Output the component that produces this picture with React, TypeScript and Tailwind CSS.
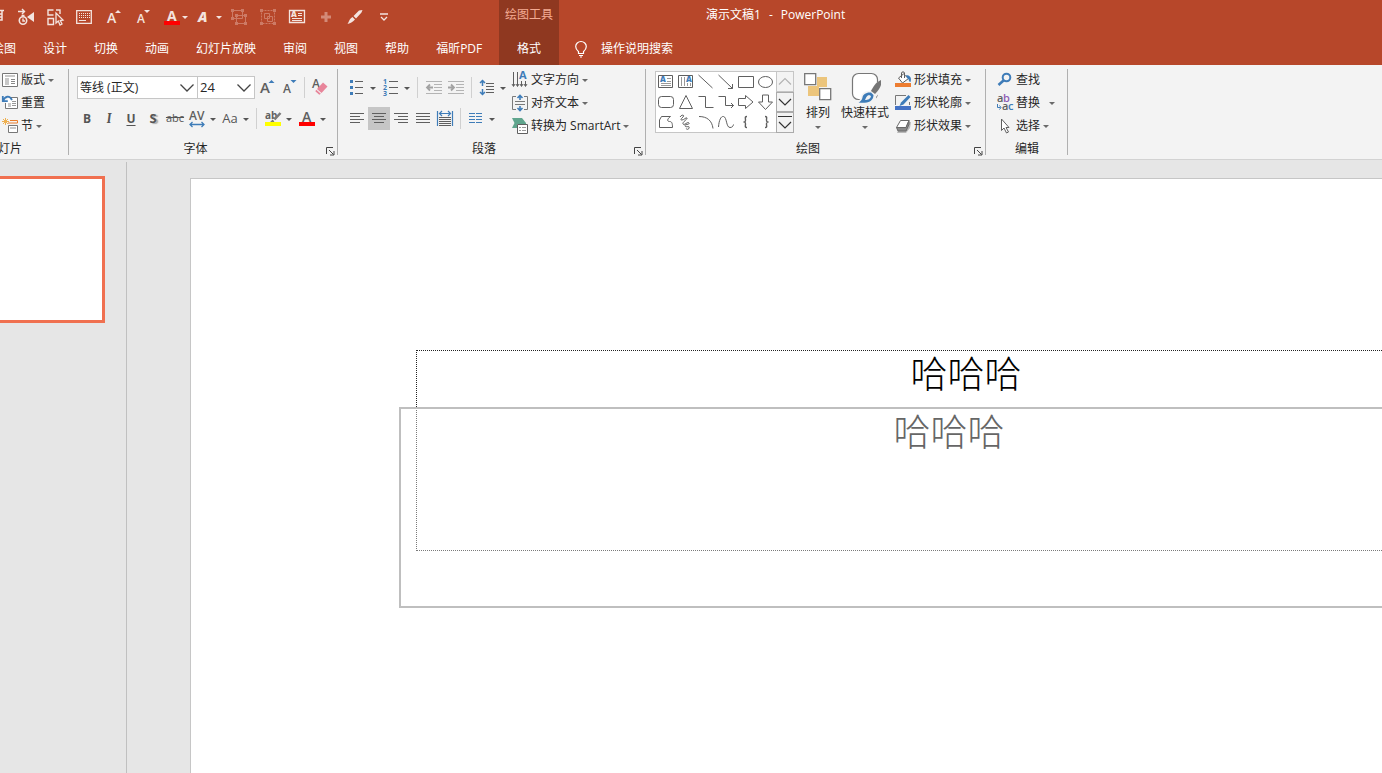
import React from 'react';
import clsx from 'clsx';

const TABS = ['绘图', '设计', '切换', '动画', '幻灯片放映', '审阅', '视图', '帮助', '福昕PDF'];

const GRAY = '#5f5f5f';
const BLUE = '#3e7cb8';

interface IconProps {
  size?: number;
  children: React.ReactNode;
}

const Icon: React.FC<IconProps> = ({ size = 16, children }) => (
  <svg width={size} height={size} viewBox={`0 0 ${size} ${size}`} fill="none" className="shrink-0 overflow-visible" aria-hidden="true">
    {children}
  </svg>
);

const Caret = ({ className }: { className?: string }) => (
  <svg width="10" height="10" viewBox="0 0 10 10" className={clsx('shrink-0', className)} aria-hidden="true">
    <path d="M2 4h6L5 7z" fill="currentColor" />
  </svg>
);

const Divider = ({ className = 'mx-1' }: { className?: string }) => (
  <div className={clsx('h-[21px] w-px shrink-0 bg-[#d0d0d0]', className)}></div>
);

interface ToolProps {
  label: string;
  menu?: boolean;
  active?: boolean;
  children: React.ReactNode;
}

// Small ribbon button, with an optional menu arrow
const Tool: React.FC<ToolProps> = ({ label, menu, active, children }) => (
  <button aria-label={label} title={label} className={clsx('flex h-[23px] shrink-0 items-center text-[#555]', active && 'bg-[#c6c6c6]')}>
    <span className="flex w-[22px] justify-center">{children}</span>
    {menu && <Caret />}
  </button>
);

// Icon + caption row
const RowTool: React.FC<{ text: string; menu?: boolean; wide?: boolean; icon: React.ReactNode }> = ({ text, menu, wide, icon }) => (
  <button className="flex h-[23px] items-center whitespace-nowrap">
    {icon}
    <span className="ml-[3px]">{text}</span>
    {menu && <Caret className={clsx('text-[#6a6a6a]', wide ? 'ml-[7px]' : 'ml-px')} />}
  </button>
);

interface GroupProps {
  label: string;
  launcher?: boolean;
  className?: string;
  labelClass?: string;
  children: React.ReactNode;
}

const Group: React.FC<GroupProps> = ({ label, launcher, className, labelClass = 'text-center', children }) => (
  <section className="flex shrink-0 flex-col">
    <div className="relative flex-1 pt-[3px] after:absolute after:-bottom-[18px] after:right-0 after:top-1 after:w-px after:bg-[#b0b0b0]">
      <div className={clsx('flex h-[69px]', className)}>{children}</div>
    </div>
    <div className="flex h-[22px] items-center pt-0.5">
      <span className={clsx('flex-1 whitespace-nowrap', labelClass)}>{label}</span>
      {launcher && (
        <button aria-label={`${label}设置`} className="mr-[3px] mt-1 w-[13px] pl-1">
          <Icon size={9}>
            <path d="M.5 7V.5H7M3 3l4.500 4.500M8 4v4H4" stroke="#444" />
          </Icon>
        </button>
      )}
    </div>
  </section>
);

const QatButton: React.FC<{ label: string; children: React.ReactNode }> = ({ label, children }) => (
  <button aria-label={label} title={label} className="flex h-6 w-[29px] shrink-0 items-center justify-center">
    {children}
  </button>
);

const QatMenuButton: React.FC<{ label: string; children: React.ReactNode }> = ({ label, children }) => (
  <button aria-label={label} title={label} className="flex h-6 w-[34px] shrink-0 items-center justify-end">
    {children}
    <Caret />
  </button>
);

const QuickAccess = () => (
  <div className="-ml-[18px] flex h-[33px] items-center text-[#f4e4df]">
    <QatButton label="从头开始">
      <Icon>
        <path d="M0 1.500h15M2 2v9h11V2M13 5H8v3h5M7 11v4" stroke="currentColor" strokeWidth="1.500" />
      </Icon>
    </QatButton>
    <QatButton label="动画计时">
      <Icon size={18}>
        <circle cx="6" cy="12.500" r="3.700" stroke="currentColor" strokeWidth="1.600" />
        <path d="M6 10.500v2.500h2M4.500 7.500h3M1 3.500h6M5 1l2.500 2.500L5 6" stroke="currentColor" strokeWidth="1.400" />
        <path d="M17 4v10l-7-5z" fill="currentColor" />
      </Icon>
    </QatButton>
    <QatButton label="选择对象">
      <Icon size={18}>
        <path d="M7.500 7H2V2h5.500M10 2h4v4M2 10.500h5.500v6H2z" stroke="currentColor" strokeWidth="1.400" />
        <path d="M10 5v10l2.300-2 1.700 4 2-1-1.700-3.500 2.700-.500z" stroke="currentColor" strokeWidth="1.300" />
      </Icon>
    </QatButton>
    <QatButton label="屏幕键盘">
      <Icon>
        <path d="M.7 1.700h14.600v12.600H.7z" stroke="currentColor" strokeWidth="1.300" />
        <path d="M3 4.500h11M3 6.500h11M3 8.500h11" stroke="currentColor" strokeDasharray="1 1" />
        <path d="M3 11.500h7" stroke="currentColor" />
      </Icon>
    </QatButton>
    <QatButton label="增大字号">
      <Icon>
        <text x="2" y="14" fontSize="14" fontWeight="600" fill="currentColor">A</text>
        <path d="M10 4h6l-3-3z" fill="currentColor" />
      </Icon>
    </QatButton>
    <QatButton label="减小字号">
      <Icon>
        <text x="3" y="14" fontSize="12" fontWeight="600" fill="currentColor">A</text>
        <path d="M10 1h6l-3 3z" fill="currentColor" />
      </Icon>
    </QatButton>
    <QatMenuButton label="字体颜色">
      <Icon>
        <text x="3" y="12" fontSize="14" fontWeight="700" fill="currentColor">A</text>
        <path d="M0 12h16v4H0z" fill="#ff0000" />
      </Icon>
    </QatMenuButton>
    <QatMenuButton label="文本效果">
      <Icon>
        <text x="0" y="13" fontSize="14" fontWeight="800" fontStyle="italic" fill="currentColor">A</text>
      </Icon>
    </QatMenuButton>
    <QatButton label="组合">
      <Icon>
        <g className="text-[#cd7a65]" stroke="currentColor" fill="none">
          <path d="M1.500 1.500h10v8h-10zM5.500 6.500h9v8h-9z" />
          <path d="M0 0h3v3H0zM10 0h3v3h-3zM0 8h3v3H0zM4 5h3v3H4zM13 5h3v3h-3zM4 13h3v3H4zM13 13h3v3h-3z" fill="currentColor" stroke="none" />
        </g>
      </Icon>
    </QatButton>
    <QatButton label="取消组合">
      <Icon>
        <g className="text-[#cd7a65]" stroke="currentColor" fill="none">
          <path d="M1.500 1.500h13v13h-13z" strokeDasharray="2 1" />
          <path d="M4.500 4.500h5v5h-5zM7.500 7.500h5v5h-5z" />
          <path d="M0 0h3v3H0zM13 0h3v3h-3zM0 13h3v3H0zM13 13h3v3h-3z" fill="currentColor" stroke="none" />
        </g>
      </Icon>
    </QatButton>
    <QatButton label="文本框">
      <Icon>
        <path d="M.5 1.500h15v12H.5z" stroke="currentColor" strokeWidth="1.300" />
        <text x="2" y="8" fontSize="8" fontWeight="800" fill="currentColor">A</text>
        <path d="M9 4.500h4M9 6.500h4M3 9.500h10M3 11.500h10" stroke="currentColor" />
      </Icon>
    </QatButton>
    <QatButton label="添加">
      <Icon>
        <path d="M8 3v10M3 8h10" stroke="#d38a77" strokeWidth="3" />
      </Icon>
    </QatButton>
    <QatButton label="格式刷">
      <Icon>
        <path d="M15.500 1 12 1.500 6.500 7l2.500 2.500 5.500-6zM5.500 8l2.500 2.500C6 13 4 14 .5 15 2 13 2.500 9.500 5.500 8z" fill="currentColor" />
      </Icon>
    </QatButton>
    <QatButton label="自定义快速访问工具栏">
      <Icon size={10}>
        <path d="M1 2h8M2 5l3 3 3-3" stroke="currentColor" strokeWidth="1.300" />
      </Icon>
    </QatButton>
  </div>
);

const TitleBar = () => (
  <header className="flex h-[65px] shrink-0 overflow-hidden bg-[#b7472a] text-white">
    <div className="w-[499px] shrink-0">
      <QuickAccess />
      <nav className="-ml-2 flex h-8 items-center gap-[27px]">
        {TABS.map((tab) => (
          <button key={tab} className="shrink-0 whitespace-nowrap">{tab}</button>
        ))}
      </nav>
    </div>
    <div className="w-[60px] shrink-0 bg-[#8f3820] text-center">
      <p className="flex h-[33px] items-center justify-center pb-1 text-[#f4ab93]">绘图工具</p>
      <button className="h-8 w-full">格式</button>
    </div>
    <div className="flex-1">
      <h1 className="flex h-[33px] items-center gap-2 whitespace-nowrap pb-1 pl-[147px]">
        <span>演示文稿1</span>
        <span>-</span>
        <span>PowerPoint</span>
      </h1>
      <button className="flex h-8 items-center gap-3 pl-[14px]">
        <Icon>
          <path d="M5.500 12.500v-2C4 9 2.700 8 2.700 5.500a5.300 5 0 0 1 10.600 0C13.300 8 12 9 10.500 10.500v2zM6 14.500h4M7 16h2" stroke="#fff" strokeWidth="1.200" />
        </Icon>
        <span>操作说明搜索</span>
      </button>
    </div>
  </header>
);

const Combo: React.FC<{ label: string; value: string; className: string }> = ({ label, value, className }) => (
  <div className={clsx('relative h-[23px] border border-[#c6c6c6] bg-white', className)}>
    <select aria-label={label} className="h-full w-full appearance-none bg-transparent pl-0.5 outline-none">
      <option>{value}</option>
    </select>
    <svg width="14" height="8" viewBox="0 0 14 8" fill="none" className="pointer-events-none absolute right-[3px] top-[7px]" aria-hidden="true">
      <path d="M.5.500 7 7 13.500.500" stroke="#444" strokeWidth="1.300" />
    </svg>
  </div>
);

const SlidesGroup = () => (
  <Group label="幻灯片" labelClass="-ml-3.5" className="w-[69px] flex-col pl-0.5">
    <RowTool text="版式" menu icon={
      <Icon>
        <path d="M.5 1.500h15v13H.5z" fill="#fff" stroke="#777" />
        <path d="M3 3h10v2H3zM3 6h4v7H3z" fill="#c8c8c8" />
        <path d="M9 7.500h4M9 9.500h4M9 11.500h4" stroke="#888" />
      </Icon>
    } />
    <RowTool text="重置" icon={
      <Icon>
        <path d="M7 2.500h8.500v11h-12V8" fill="#fff" stroke="#777" />
        <path d="M6 8h3v4H6z" fill="#c8c8c8" />
        <path d="M10 6.500h4M10 8.500h4M10 10.500h4" stroke="#999" />
        <path d="M1 6C3 1 7.500 0 10 5M.8 1v5.200h5" stroke={BLUE} strokeWidth="1.800" />
      </Icon>
    } />
    <RowTool text="节" menu icon={
      <Icon>
        <path d="M3.500 0v7M0 3.500h7M1 1l5 5M6 1 1 6" stroke="#eeb04f" />
        <path d="M8 2.500h7.500V5H6" stroke="#e87d2c" />
        <path d="M6.500 7.500h9v7h-9z" fill="#fff" stroke="#777" />
        <path d="M8 9h6v2H8z" fill="#c8c8c8" />
      </Icon>
    } />
  </Group>
);

const FontGroup = () => (
  <Group label="字体" launcher className="w-[269px] flex-col gap-2 pl-2 pt-2">
    <div className="flex items-center">
      <Combo label="字体" value="等线 (正文)" className="w-[121px]" />
      <Combo label="字号" value="24" className="-ml-px w-[58px] text-[13px]" />
      <span className="ml-px flex">
        <Tool label="增大字号">
          <Icon>
            <text x="1" y="13" fontSize="15" fontWeight="600" fill={GRAY}>A</text>
            <path d="M9.500 3h6l-3-3z" fill={BLUE} />
          </Icon>
        </Tool>
        <Tool label="减小字号">
          <Icon>
            <text x="2" y="13" fontSize="12" fontWeight="600" fill={GRAY}>A</text>
            <path d="M9.500 0h6l-3 3z" fill={BLUE} />
          </Icon>
        </Tool>
      </span>
      <Divider />
      <Tool label="清除所有格式">
        <Icon>
          <text x="0" y="8" fontSize="12" fontWeight="600" fill={GRAY}>A</text>
          <path d="m5 9 6-6.500 4.500 4L9.500 13z" fill="#e8859a" />
          <path d="m4.300 9.800 4.500 4-1.500 1-4-3.500z" fill="#e8859a" />
        </Icon>
      </Tool>
    </div>
    <div className="-ml-px flex items-center">
      <Tool label="加粗"><span className="font-bold">B</span></Tool>
      <Tool label="倾斜"><span className="font-serif text-[13px] font-bold italic">I</span></Tool>
      <Tool label="下划线"><span className="font-bold underline underline-offset-2">U</span></Tool>
      <Tool label="文字阴影"><span className="text-[13px] font-bold [text-shadow:2px_1px_1px_#aaa]">S</span></Tool>
      <Tool label="删除线"><span className="text-[11px] line-through">abc</span></Tool>
      <Tool label="字符间距" menu>
        <Icon>
          <text x="0" y="9" fontSize="12" fontWeight="600" fill={GRAY}>AV</text>
          <path d="M1 13.500h14M3.500 11 1 13.500 3.500 16M12.500 11l2.500 2.500-2.500 2.500" stroke={BLUE} strokeWidth="1.300" />
        </Icon>
      </Tool>
      <span className="ml-px flex">
        <Tool label="更改大小写" menu><span className="text-[13px]">Aa</span></Tool>
      </span>
      <Divider className="mx-[5px]" />
      <span className="flex gap-0.5">
        <Tool label="文本突出显示颜色" menu>
          <Icon>
            <text x="0" y="8" fontSize="10" fontWeight="700" fill={GRAY}>ab</text>
            <path d="M15.500 2 9.500 8.500M8.500 9.500 6 12" stroke="#7a7a7a" strokeWidth="2.500" />
            <path d="M0 11h16v4H0z" fill="#ffff00" />
          </Icon>
        </Tool>
        <Tool label="字体颜色" menu>
          <Icon>
            <text x="3" y="11" fontSize="14" fontWeight="600" fill={GRAY}>A</text>
            <path d="M0 11h16v4H0z" fill="#ff0000" />
          </Icon>
        </Tool>
      </span>
    </div>
  </Group>
);

const AlignIcon: React.FC<{ d: string }> = ({ d }) => (
  <Icon>
    <path d={d} stroke={GRAY} />
  </Icon>
);

const ParagraphGroup = () => (
  <Group label="段落" launcher className="w-[308px] pl-2">
    <div className="flex w-[166px] flex-col gap-2 pt-2">
      <div className="flex items-center">
        <span className="flex gap-0.5">
          <Tool label="项目符号" menu>
            <Icon>
              <path d="M1 0h3v3H1zM1 6h3v3H1zM1 12h3v3H1z" fill={BLUE} />
              <path d="M6 1.500h8M6 7.500h8M6 13.500h8" stroke={GRAY} />
            </Icon>
          </Tool>
          <Tool label="编号" menu>
            <Icon>
              <g fontSize="7" fontWeight="700" fill={BLUE}>
                <text x="0" y="4">1</text>
                <text x="0" y="10">2</text>
                <text x="0" y="16">3</text>
              </g>
              <path d="M6 1.500h9M6 7.500h9M6 13.500h9" stroke={GRAY} />
            </Icon>
          </Tool>
        </span>
        <Divider className="mx-[5px]" />
        <Tool label="降低列表级别">
          <Icon>
            <path d="M0 1.500h16M8 4.500h8M8 7.500h8M8 10.500h8M0 13.500h16" stroke="#b4b4b4" />
            <path d="M1 7.500h6M4 4.500l-3 3 3 3" stroke="#a2a2a2" strokeWidth="1.800" />
          </Icon>
        </Tool>
        <Tool label="提高列表级别">
          <Icon>
            <path d="M0 1.500h16M8 4.500h8M8 7.500h8M8 10.500h8M0 13.500h16" stroke="#b4b4b4" />
            <path d="M0 7.500h6M3 4.500l3 3-3 3" stroke="#a2a2a2" strokeWidth="1.800" />
          </Icon>
        </Tool>
        <Divider />
        <Tool label="行距" menu>
          <Icon>
            <path d="M3.500 0v6M1 3 3.500.5 6 3M3.500 9v6M1 12l2.500 2.500L6 12" stroke={BLUE} strokeWidth="1.500" />
            <path d="M7 3.500h8M7 6.500h8M7 9.500h8M7 12.500h8" stroke={GRAY} />
          </Icon>
        </Tool>
      </div>
      <div className="flex items-center">
        <Tool label="左对齐"><AlignIcon d="M1 2.500h14M1 5.500h10M1 8.500h14M1 11.500h10" /></Tool>
        <Tool label="居中" active><AlignIcon d="M1 2.500h14M3 5.500h10M1 8.500h14M3 11.500h10" /></Tool>
        <Tool label="右对齐"><AlignIcon d="M1 2.500h14M5 5.500h10M1 8.500h14M5 11.500h10" /></Tool>
        <Tool label="两端对齐"><AlignIcon d="M1 2.500h14M1 5.500h14M1 8.500h14M1 11.500h14" /></Tool>
        <Tool label="分散对齐">
          <Icon>
            <path d="M.5 0v15M15.500 0v15M2.500 2.500h11M5 0 2.500 2.500 5 5M11 0l2.500 2.500L11 5" stroke={BLUE} strokeWidth="1.200" />
            <path d="M2 6.500h12M2 8.500h12M2 10.500h12M2 12.500h12M2 14.500h12" stroke={GRAY} />
          </Icon>
        </Tool>
        <Divider />
        <Tool label="分栏" menu>
          <Icon>
            <path d="M1 2.500h6M1 5.500h6M1 8.500h6M1 11.500h6M8 2.500h6M8 5.500h6M8 8.500h6M8 11.500h6" stroke={BLUE} />
          </Icon>
        </Tool>
      </div>
    </div>
    <div className="flex flex-col">
      <RowTool text="文字方向" menu icon={
        <Icon>
          <path d="M1.500 0v14M5.500 0v14M9.500 9v5M13.500 9v5M0 12l1.500 2.500L3 12M4 12l1.500 2.500L7 12M8 12l1.500 2.500L11 12M12 12l1.500 2.500L15 12" stroke={GRAY} />
          <text x="7" y="7" fontSize="11" fontWeight="700" fill={BLUE}>A</text>
        </Icon>
      } />
      <RowTool text="对齐文本" menu icon={
        <Icon>
          <path d="M4 1.500H.500v13H4M12 1.500h3.500v13H12M3 6.500h10M3 9.500h10" stroke="#7a7a7a" />
          <path d="M8 0v5M5.500 3 8 .5 10.500 3M8 11v5M5.500 13 8 15.500l2.500-2.500" stroke={BLUE} strokeWidth="1.600" />
        </Icon>
      } />
      <RowTool text="转换为 SmartArt" menu icon={
        <Icon>
          <path d="M0 0h10l4 5v1H5v4H0l2.500-5z" fill="#5fa58d" />
          <path d="M5.500 6.500h10v9h-10z" fill="#fff" stroke={GRAY} />
          <path d="M7 9.500h2M10 9.500h4M7 12.500h2M10 12.500h4" stroke="#999" />
        </Icon>
      } />
    </div>
  </Group>
);

const SHAPES: { name: string; node: React.ReactNode }[] = [
  {
    name: '文本框',
    node: (
      <>
        <path d="M.5 1.500h14v12H.500z" />
        <path d="M9 4.500h4M9 7.500h4M3 9.500h10M3 11.500h10" stroke="#999" />
        <text x="2" y="8" fontSize="8" fontWeight="800" fill={BLUE} stroke="none">A</text>
      </>
    ),
  },
  {
    name: '竖排文本框',
    node: (
      <>
        <path d="M.5 1.500h14v12H.500z" />
        <path d="M3.500 3v9M6.500 3v9M9.500 9v3M12.500 9v3" stroke="#999" />
        <text x="8" y="8" fontSize="8" fontWeight="800" fill={BLUE} stroke="none">A</text>
      </>
    ),
  },
  { name: '直线', node: <path d="M.5 1 14.500 14" /> },
  { name: '箭头', node: <path d="M.5 1 14.500 14.500M14.500 10v4.500H10" /> },
  { name: '矩形', node: <path d="M.5 2.500h15v11H.500z" /> },
  { name: '椭圆', node: <ellipse cx="7.500" cy="8" rx="7" ry="5.500" /> },
  { name: '圆角矩形', node: <rect x=".5" y="2.500" width="15" height="11" rx="3" /> },
  { name: '三角形', node: <path d="M8 1.500 14.500 14.500h-13z" /> },
  { name: '肘形连接符', node: <path d="M.5 2.500h7v11h8" /> },
  { name: '肘形箭头', node: <path d="M.5 2.500h7v9h8M13 9l2.500 2.500L13 14" /> },
  { name: '右箭头', node: <path d="M.5 4.500h7v-3l7.500 6.500-7.500 6.500v-3h-7z" /> },
  { name: '下箭头', node: <path d="M4.500 1v7h-4L7.500 15.500 14.500 8h-4V1z" /> },
  { name: '任意多边形', node: <path d="M3.500 2.500h9c-3 2-4 5-1 5 2 0 3 1 3 6h-13V6z" /> },
  { name: '自由曲线', node: <path d="M2 3c2-3 5-2 3 0s-3 3-1 3 4-3 5-2-5 4-4 6 5-3 6-1-5 1-4 3 5-1 4 2-3 0-3 1" /> },
  { name: '弧形', node: <path d="M1 2.500c8 0 13 4 14 12" /> },
  { name: '曲线', node: <path d="M.5 13C1 6 3 2 5.500 2.500 9 3 8 13.500 12 13.500c2 0 3-1 3.500-3" /> },
  { name: '左大括号', node: <path d="M9 2.500C6.500 2.500 7.500 4 7.500 6s-.5 2-2 2c1.500 0 2 0 2 2s-1 3.500 1.500 3.500" strokeWidth="1.400" /> },
  { name: '右大括号', node: <path d="M7 2.500C9.500 2.500 8.500 4 8.500 6s.5 2 2 2c-1.500 0-2 0-2 2s1 3.500-1.500 3.500" strokeWidth="1.400" /> },
];

const ShapeGallery = () => (
  <div className="mt-[3px] flex h-[62px]">
    <div className="grid grid-cols-[repeat(6,20px)] grid-rows-3 border border-r-0 border-[#c6c6c6] bg-white">
      {SHAPES.map((shape) => (
        <button key={shape.name} aria-label={shape.name} title={shape.name} className="flex items-center justify-center">
          <svg width="16" height="16" viewBox="0 0 16 16" fill="none" stroke={GRAY} className="overflow-visible" aria-hidden="true">{shape.node}</svg>
        </button>
      ))}
    </div>
    <div className="grid w-[18px] grid-rows-3">
      <button aria-label="上一行" className="flex items-center justify-center border border-[#c6c6c6]">
        <Icon><path d="M2 11.500 8 5.500l6 6" stroke="#b4b4b4" strokeWidth="1.200" /></Icon>
      </button>
      <button aria-label="下一行" className="flex items-center justify-center border border-[#ababab]">
        <Icon><path d="m2 5 6 6 6-6" stroke="#333" strokeWidth="1.200" /></Icon>
      </button>
      <button aria-label="其他形状" className="flex items-center justify-center border border-[#ababab]">
        <Icon><path d="M1 1.500h14M2 7l6 6 6-6" stroke="#333" strokeWidth="1.200" /></Icon>
      </button>
    </div>
  </div>
);

const DrawingGroup = () => (
  <Group label="绘图" launcher className="w-[340px] pl-[9px]">
    <ShapeGallery />
    <button className="ml-1.5 flex w-9 flex-col items-center pt-1">
      <svg width="28" height="32" viewBox="0 0 28 32" fill="none" aria-hidden="true">
        <path d="M13 5h10v10H13zM4 14h11v10H4z" fill="#ecc57c" />
        <path d="M.7 1.700h11v11H.700zM15.700 16.700h11v11h-11z" fill="#fff" stroke="#777" strokeWidth="1.300" />
      </svg>
      <span className="h-[18px] leading-[18px]">排列</span>
      <Caret className="text-[#6a6a6a]" />
    </button>
    <button className="ml-[5px] flex w-12 flex-col items-center whitespace-nowrap pt-1">
      <svg width="32" height="32" viewBox="0 0 32 32" fill="none" aria-hidden="true">
        <rect x="3.500" y="1.500" width="25" height="26" rx="6" fill="#fff" stroke="#777" strokeWidth="1.200" />
        <path d="M34 7 23 20l3 3 10-12z" fill="#f3f3f3" stroke="#f3f3f3" strokeWidth="4" />
        <path d="M22 20c-5-1-9 2-9 6-1 2-3 4-5 5h18V22z" fill="#f3f3f3" stroke="#f3f3f3" strokeWidth="2" />
        <path d="M32 8c-5 2-8 7-10 11l4 3c3-3 5-6 6-9z" fill="#757575" />
        <path d="M22 20.500c-5-.5-8 2-8.500 5-.5 2.500-2 4-4 5 7 1 15 0 15-7.500z" fill={BLUE} />
        <path d="M20 23c-2.500.5-3 3-4 5 3 0 5.500-1 6-4z" fill="#f3f3f3" />
      </svg>
      <span className="h-[18px] leading-[18px]">快速样式</span>
      <Caret className="text-[#6a6a6a]" />
    </button>
    <div className="ml-1.5 flex flex-col">
      <RowTool text="形状填充" menu icon={
        <Icon>
          <path d="M3.500 6 8.500 2l5 4.500-6 4.500z" fill="#fff" stroke={GRAY} />
          <path d="M6.500 6V1c0-1.500 3-1.500 3 0v5" stroke={GRAY} />
          <path d="M11 3c4 0 6 3 4.500 7-2 0-1-3-3.500-4z" fill={BLUE} />
          <path d="M0 11h16v4H0z" fill="#ed7d31" />
        </Icon>
      } />
      <RowTool text="形状轮廓" menu icon={
        <Icon>
          <path d="M11 .5H.5V10M14.500 7v3" stroke="#777" />
          <path d="m13.500 0 2 2-7 7.500-4 1.500 1.500-3.500z" fill={BLUE} />
          <path d="M0 11h16v4H0z" fill="#4472c4" />
        </Icon>
      } />
      <RowTool text="形状效果" menu icon={
        <Icon>
          <path d="M6 4h10l-1 6-4 5H2z" fill="#b9b9b9" />
          <path d="M5.500 2.500h8.500l-3 7H1.500z" fill="#fff" stroke="#6a6a6a" strokeLinejoin="round" />
          <path d="M1.500 9.500h9.500l3-7v4l-3 6.500h-8z" fill="#8a8a8a" stroke="#6a6a6a" strokeLinejoin="round" />
        </Icon>
      } />
    </div>
  </Group>
);

const EditGroup = () => (
  <Group label="编辑" className="w-[82px] flex-col pl-[11px]">
    <RowTool text="查找" icon={
      <Icon>
        <circle cx="9.500" cy="5.500" r="3.800" stroke={BLUE} strokeWidth="2" />
        <path d="M6.500 8.500 1.500 13" stroke={BLUE} strokeWidth="2.600" />
      </Icon>
    } />
    <RowTool text="替换" menu wide icon={
      <Icon>
        <g fontSize="11" fontWeight="600">
          <text x="0" y="7" fill={GRAY}>a</text>
          <text x="6" y="7" fill="#8e5cb5">b</text>
          <text x="5" y="15" fill={GRAY}>a</text>
          <text x="11" y="15" fill={BLUE}>c</text>
        </g>
        <path d="M.5 9v3.500h3M2.500 10.500l1.500 2-1.500 2" stroke={BLUE} />
      </Icon>
    } />
    <RowTool text="选择" menu icon={
      <Icon>
        <path d="M4.500 1v11.500l2.500-2.500 2.500 5 2-1-2.500-4.500h3z" fill="#fff" stroke={GRAY} />
      </Icon>
    } />
  </Group>
);

const Ribbon = () => (
  <div className="flex h-[95px] shrink-0 border-b border-[#d2d2d2] bg-[#f3f3f3] text-[#262626]">
    <SlidesGroup />
    <FontGroup />
    <ParagraphGroup />
    <DrawingGroup />
    <EditGroup />
  </div>
);

const Workspace = () => (
  <main className="flex min-h-0 flex-1 bg-[#e6e6e6]">
    <aside className="mt-0.5 w-[127px] shrink-0 border-r border-[#c0c0c0] pt-3.5">
      <button aria-label="幻灯片 1" className="block h-[147px] w-[105px] border-[3px] border-l-0 border-[#f07050] bg-white"></button>
    </aside>
    <div className="min-w-0 flex-1 pl-[63px] pt-[18px]">
      <div className="relative h-full overflow-hidden border-l border-t border-[#c6c6c6] bg-white font-['Noto_Sans_CJK_SC',sans-serif] text-[37px] font-light leading-[42px]">
        <div className="absolute left-[225px] top-[171px] h-[201px] w-[1100px] border border-dotted border-[#222] text-center text-black">
          <p>哈哈哈</p>
        </div>
        {/* ghost of the box while it is being dragged */}
        <div className="absolute left-[208px] top-[228px] h-[201px] w-[1100px] border-2 border-[#bfbfbf] bg-white/40 text-center text-[#666]">
          <p>哈哈哈</p>
        </div>
      </div>
    </div>
  </main>
);

export default function App() {
  return (
    <div className="flex h-screen flex-col overflow-hidden font-['Open_Sans','Noto_Sans_CJK_SC',sans-serif] text-xs">
      <TitleBar />
      <Ribbon />
      <Workspace />
    </div>
  );
}
